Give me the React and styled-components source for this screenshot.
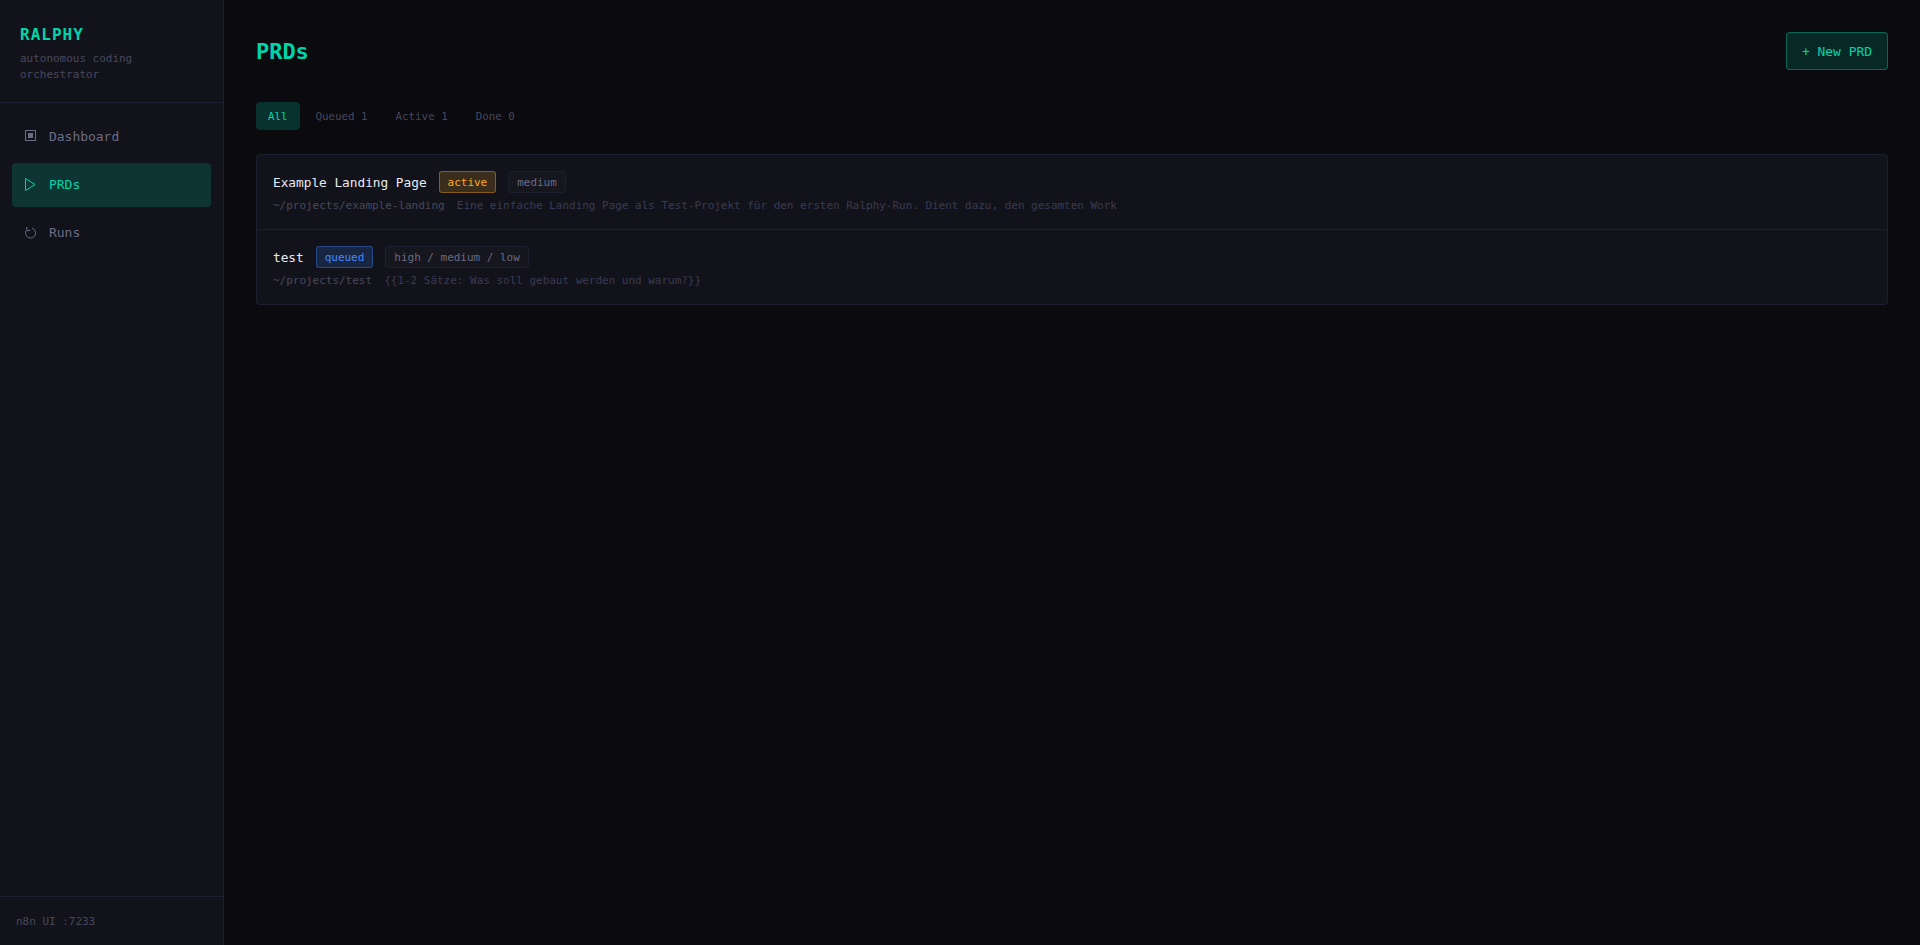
import React from "react";
import styled, { createGlobalStyle } from "styled-components";

const Global = createGlobalStyle`
  html, body {
    margin: 0;
    height: 100%;
    background: #0a0a0f;
    color: #e8e8f0;
    font-family: "DejaVu Sans Mono", monospace;
  }
  * {
    box-sizing: border-box;
    letter-spacing: -0.002em;
  }
  #root { height: 100%; }
`;

const Layout = styled.div`
  display: flex;
  height: 100vh;
`;

//////////
// SIDEBAR
//////////

const Sidebar = styled.aside`
  width: 224px;
  flex-shrink: 0;
  display: flex;
  flex-direction: column;
  background: #12131a;
  border-right: 1px solid #1e1f2e;
`;

const Brand = styled.div`
  padding: 25px 20px 0;
  height: 103px;
  border-bottom: 1px solid #1e1f2e;
`;

const Logo = styled.div`
  font-size: 16px;
  line-height: 20px;
  font-weight: 700;
  letter-spacing: 1px;
  color: #00d4aa;
`;

const Tagline = styled.div`
  margin-top: 6px;
  font-size: 11px;
  line-height: 16px;
  color: #47475e;
`;

const Nav = styled.nav`
  flex: 1;
  display: flex;
  flex-direction: column;
  gap: 4px;
  padding: 12px;
`;

const NavItem = styled.a`
  height: 44px;
  display: flex;
  align-items: center;
  gap: 11px;
  padding: 0 12px 2px;
  border-radius: 4px;
  font-size: 13px;
  color: ${(p) => (p.$active ? "#00d4aa" : "#6b6b85")};
  background: ${(p) => (p.$active ? "rgba(0, 212, 170, 0.18)" : "transparent")};
`;

const IconSvg = styled.svg`
  width: 14px;
  height: 14px;
  flex-shrink: 0;
  fill: none;
  stroke: currentColor;
`;

const DashboardIcon = () => (
  <IconSvg viewBox="0 0 14 14">
    <rect x="1.5" y="1.5" width="10" height="10" strokeWidth="1" />
    <rect x="4" y="4" width="5" height="5" fill="currentColor" stroke="none" />
  </IconSvg>
);

const PlayIcon = () => (
  <IconSvg viewBox="0 0 14 14">
    <path d="M1.5 1.5 L11 7.5 L1.5 13.5 Z" strokeWidth="1" />
  </IconSvg>
);

const RefreshIcon = () => (
  <IconSvg viewBox="0 0 14 14">
    <path d="M8 3.2 A5 5 0 1 1 2.2 5.5" strokeWidth="1" />
    <path d="M2.6 2 L3 5.7 L6.4 5.2" strokeWidth="1" />
  </IconSvg>
);

const SidebarFoot = styled.div`
  height: 49px;
  padding: 0 16px;
  display: flex;
  align-items: center;
  border-top: 1px solid #1e1f2e;
  font-size: 11px;
  color: #47475e;
`;

//////////
// MAIN
//////////

const Main = styled.main`
  flex: 1;
  min-width: 0;
  padding: 32px;
`;

const PageHead = styled.header`
  display: flex;
  justify-content: space-between;
  align-items: center;
  margin-bottom: 32px;
`;

const Title = styled.h1`
  margin: 0;
  font-size: 22px;
  font-weight: 700;
  color: #00d4aa;
`;

const NewButton = styled.button`
  height: 38px;
  width: 102px;
  padding: 0;
  font: 13px "DejaVu Sans Mono", monospace;
  color: #00d4aa;
  background: rgba(0, 212, 170, 0.15);
  border: 1px solid rgba(0, 212, 170, 0.37);
  border-radius: 4px;
`;

const Tabs = styled.div`
  display: flex;
  gap: 4px;
  margin-bottom: 24px;
`;

const Tab = styled.button`
  height: 28px;
  padding: 0 12px;
  font: 10.85px "DejaVu Sans Mono", monospace;
  color: ${(p) => (p.$active ? "#00d4aa" : "#47475e")};
  background: ${(p) => (p.$active ? "rgba(0, 212, 170, 0.2)" : "transparent")};
  border: none;
  border-radius: 4px;
`;

const List = styled.div`
  background: #12131a;
  border: 1px solid #1e1f2e;
  border-radius: 4px;
`;

const Row = styled.div`
  padding: 16px 16px 15px;
  & + & {
    border-top: 1px solid #1e1f2e;
  }
`;

const RowHead = styled.div`
  display: flex;
  align-items: center;
  gap: 12px;
  height: 22px;
`;

const Name = styled.span`
  font-size: 12.8px;
  color: #e8e8f0;
`;

const badgeTones = {
  active: "color: #ffa726; background: rgba(245, 166, 35, 0.18); border-color: rgba(245, 166, 35, 0.4);",
  queued: "color: #4488ff; background: rgba(59, 130, 246, 0.18); border-color: rgba(59, 130, 246, 0.4);",
  plain: "color: #6b6b85; background: #15161e; border-color: #1e1f2e;",
};

const Badge = styled.span`
  height: 22px;
  padding: 0 8px;
  display: inline-flex;
  align-items: center;
  font-size: 11px;
  border: 1px solid;
  border-radius: 3px;
  ${(p) => badgeTones[p.$tone]}
`;

const Meta = styled.div`
  margin-top: 5px;
  font-size: 11px;
  line-height: 16px;
  white-space: pre;
  color: #3a3a52;
`;

const Path = styled.span`
  margin-right: -1px;
  color: #47475a;
`;

const prds = [
  {
    name: "Example Landing Page",
    status: "active",
    priority: "medium",
    path: "~/projects/example-landing",
    text: "Eine einfache Landing Page als Test-Projekt für den ersten Ralphy-Run. Dient dazu, den gesamten Work",
  },
  {
    name: "test",
    status: "queued",
    priority: "high / medium / low",
    path: "~/projects/test",
    text: "{{1-2 Sätze: Was soll gebaut werden und warum?}}",
  },
];

const App = () => {
  return (
    <Layout>
      <Global />
      <Sidebar>
        <Brand>
          <Logo>RALPHY</Logo>
          <Tagline>autonomous coding orchestrator</Tagline>
        </Brand>
        <Nav>
          <NavItem>
            <DashboardIcon />
            Dashboard
          </NavItem>
          <NavItem $active>
            <PlayIcon />
            PRDs
          </NavItem>
          <NavItem>
            <RefreshIcon />
            Runs
          </NavItem>
        </Nav>
        <SidebarFoot>n8n UI :7233</SidebarFoot>
      </Sidebar>
      <Main>
        <PageHead>
          <Title>PRDs</Title>
          <NewButton>+ New PRD</NewButton>
        </PageHead>
        <Tabs>
          <Tab $active>All</Tab>
          <Tab>Queued 1</Tab>
          <Tab>Active 1</Tab>
          <Tab>Done 0</Tab>
        </Tabs>
        <List>
          {prds.map((prd) => (
            <Row key={prd.name}>
              <RowHead>
                <Name>{prd.name}</Name>
                <Badge $tone={prd.status}>{prd.status}</Badge>
                <Badge $tone="plain">{prd.priority}</Badge>
              </RowHead>
              <Meta>
                <Path>{prd.path}</Path>
                {"  "}
                {prd.text}
              </Meta>
            </Row>
          ))}
        </List>
      </Main>
    </Layout>
  );
};

export default App;
